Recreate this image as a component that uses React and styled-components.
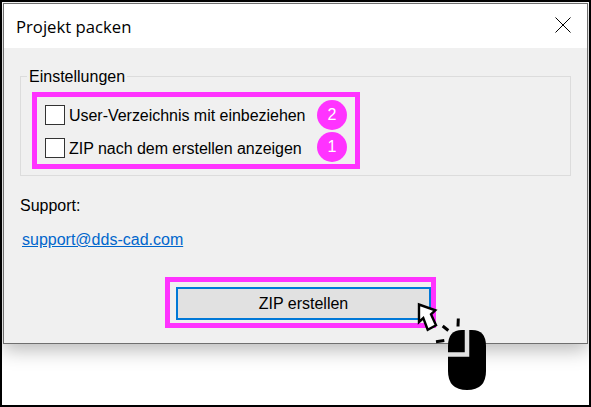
import styled, { createGlobalStyle } from "styled-components";

const GlobalStyle = createGlobalStyle`
  html, body { margin: 0; padding: 0; background: #fff; }
  * { box-sizing: border-box; }
`;

function CloseIcon() {
  return (
    <CloseSvg width="16" height="16" viewBox="0 0 16 16">
      <path d="M0.5 0.5 L15.5 15.5 M15.5 0.5 L0.5 15.5" stroke="#000" strokeWidth="1" fill="none" />
    </CloseSvg>
  );
}

function MouseClick() {
  return (
    <MouseSvg width="72" height="90" viewBox="0 0 72 90">
      {/* pointer */}
      <path
        d="M2 1.5 L2 19 L6.3 15 L10.7 26.7 L19 22.3 L14 11.3 L18.3 7.3 Z"
        fill="#fff"
        stroke="#000"
        strokeWidth="2.4"
        strokeLinejoin="miter"
      />
      {/* click ticks */}
      <path d="M41.3 15.5 L41 23.5" stroke="#000" strokeWidth="3" fill="none" />
      <path d="M25.7 23 L31.3 27.5" stroke="#000" strokeWidth="3" fill="none" />
      <path d="M19 38.8 L27.3 37.6" stroke="#000" strokeWidth="3" fill="none" />
      {/* mouse body */}
      <path
        d="M31 43 Q31 27 45 27 L55 27 Q69 27 69 43 L69 68 Q69 87 50 87 Q31 87 31 68 Z"
        fill="#000"
      />
      <path d="M31 51.5 L50 51.5 L50 27" stroke="#e2e2e2" strokeWidth="4.5" fill="none" />
    </MouseSvg>
  );
}

export default function App() {
  return (
    <>
      <GlobalStyle />
      <Page>
        <Dialog>
          <TitleBar>
            <Title>Projekt packen</Title>
            <CloseIcon />
          </TitleBar>
          <Body>
            <Group>
              <Legend>Einstellungen</Legend>
              <Highlight>
                <Row>
                  <Check />
                  <RowLabel>User-Verzeichnis mit einbeziehen</RowLabel>
                </Row>
                <Row>
                  <Check />
                  <RowLabel>ZIP nach dem erstellen anzeigen</RowLabel>
                </Row>
                <Badge $top={3}>2</Badge>
                <Badge $top={35}>1</Badge>
              </Highlight>
            </Group>
            <SupportLabel>Support:</SupportLabel>
            <SupportLink href="#">support@dds-cad.com</SupportLink>
            <Actions>
              <ButtonFrame>
                <ZipButton>ZIP erstellen</ZipButton>
              </ButtonFrame>
            </Actions>
          </Body>
        </Dialog>
        <MouseClick />
      </Page>
    </>
  );
}

const Page = styled.div`
  position: relative;
  width: 591px;
  height: 407px;
  border: 2px solid #000;
  padding: 1px 1px 0 1px;
  background: #fff;
  overflow: hidden;
  font-family: "Liberation Sans", Arial, sans-serif;
`;

const Dialog = styled.div`
  width: 585px;
  height: 341px;
  border: 1px solid #6f6f6f;
  background: #f0f0f0;
  box-shadow: 0 6px 18px rgba(0, 0, 0, 0.28);
  display: flex;
  flex-direction: column;
`;

const TitleBar = styled.div`
  height: 44px;
  flex: none;
  background: #fff;
  display: flex;
  align-items: center;
  justify-content: space-between;
  padding: 0 16px 0 12px;
`;

const Title = styled.div`
  font-family: "Open Sans", "Noto Sans", sans-serif;
  font-size: 16.7px;
  color: #000;
`;

const CloseSvg = styled.svg`
  display: block;
  margin-top: -3px;
`;

const Body = styled.div`
  flex: 1;
  padding: 28px 16px 0 16px;
  display: flex;
  flex-direction: column;
`;

const Group = styled.div`
  position: relative;
  width: 551px;
  height: 100px;
  border: 1px solid #dcdcdc;
  padding: 15px 0 0 11px;
`;

const Legend = styled.div`
  position: absolute;
  left: 6px;
  top: -9px;
  padding: 0 2px;
  background: #f0f0f0;
  font-size: 16px;
  line-height: 18px;
  color: #000;
`;

const Highlight = styled.div`
  position: relative;
  width: 328px;
  height: 77px;
  border: 5px solid #ff33ff;
  padding: 2px 8px 0 8px;
  display: flex;
  flex-direction: column;
`;

const Row = styled.div`
  height: 33px;
  display: flex;
  align-items: center;
`;

const Check = styled.span`
  width: 20px;
  height: 20px;
  flex: none;
  background: #fff;
  border: 1px solid #333;
`;

const RowLabel = styled.span`
  margin-left: 4px;
  padding-top: 2px;
  font-size: 16px;
  letter-spacing: -0.03px;
  color: #000;
  white-space: nowrap;
`;

const Badge = styled.span`
  position: absolute;
  right: 8px;
  top: ${(p) => p.$top}px;
  width: 30px;
  height: 30px;
  border-radius: 50%;
  background: #ff33ff;
  color: #fff;
  font-size: 16px;
  display: flex;
  align-items: center;
  justify-content: center;
`;

const SupportLabel = styled.div`
  margin-top: 21px;
  font-size: 16px;
  line-height: 18px;
  color: #000;
`;

const SupportLink = styled.a`
  margin-top: 16px;
  margin-left: 2px;
  width: fit-content;
  font-size: 16px;
  line-height: 18px;
  color: #0066cc;
  text-decoration: underline;
`;

const Actions = styled.div`
  display: flex;
  margin-top: 28px;
  padding-left: 145px;
`;

const ButtonFrame = styled.div`
  width: 271px;
  height: 51px;
  border: 5px solid #ff33ff;
  padding: 5px 0 0 6px;
`;

const ZipButton = styled.button`
  display: block;
  width: 255px;
  height: 33px;
  border: 2px solid #0078d7;
  background: #e1e1e1;
  font-family: "Liberation Sans", Arial, sans-serif;
  font-size: 16px;
  color: #000;
  padding: 0;
`;

const MouseSvg = styled.svg`
  position: absolute;
  left: 415px;
  top: 301px;
  overflow: visible;
`;
